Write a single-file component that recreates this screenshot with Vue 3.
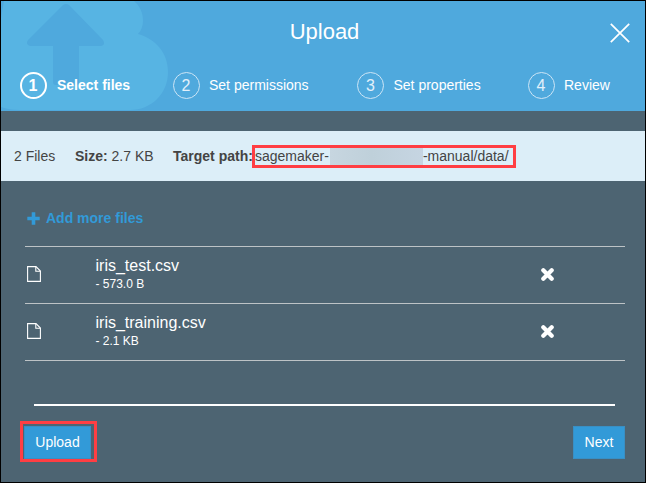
<script setup>
const steps = ['Select files', 'Set permissions', 'Set properties', 'Review']
const files = [
  { name: 'iris_test.csv', size: '573.0 B' },
  { name: 'iris_training.csv', size: '2.1 KB' },
]
</script>

<template>
  <div class="dialog">
    <header class="header">
      <svg class="cloud" width="170" height="110" viewBox="1 1 170 110" aria-hidden="true">
        <path fill="#57b4e3" d="M4 1H134C140 6 143 13 143 21C143 26 141 31 138 34C156 39 168 53 168 72C168 94 151 110 130 110H20Q9 110 1 107V18Z" />
        <path fill="#4fa9dd" d="M63 5Q66 3 69 5L103 40Q106 45 101 46H79V82Q79 85 76 85H56Q53 85 53 82V46H30Q25 44 28 40Z" />
      </svg>
      <h1 class="title">Upload</h1>
      <button class="close" aria-label="Close">
        <svg width="20" height="20" viewBox="0 0 20 20"><path d="M.8.8 19.2 19.2M19.2.8.8 19.2" stroke="#fff" stroke-width="1.7" /></svg>
      </button>
      <nav class="steps">
        <div v-for="(s, i) in steps" :key="s" class="step" :class="{ active: i === 0 }">
          <span class="num">{{ i + 1 }}</span><span class="label">{{ s }}</span>
        </div>
      </nav>
    </header>

    <section class="summary">
      <span class="count">2 Files</span>
      <span class="size"><b>Size:</b> 2.7 KB</span>
      <b class="target">Target path:</b>
      <span class="path"><span>sagemaker-</span><i class="redacted"></i><span>-manual/data/</span></span>
    </section>

    <main class="content">
      <button class="add">
        <svg width="13" height="13" viewBox="0 0 13 13"><path d="M6.5.3V12.7M.3 6.5H12.7" stroke="#329ad8" stroke-width="3.6" /></svg>
        <span>Add more files</span>
      </button>
      <div class="list">
        <div v-for="f in files" :key="f.name" class="row">
          <svg class="doc" width="14" height="16" viewBox="0 0 14 16" fill="none" stroke="#fff" stroke-width="1.1"><path d="M.6.6H9L13.4 5V15.4H.6Z" /><path d="M8.8.8V5.3H13.2" /></svg>
          <div class="info">
            <div class="name">{{ f.name }}</div>
            <div class="bytes">- {{ f.size }}</div>
          </div>
          <svg class="remove" width="13" height="13" viewBox="0 0 13 13"><path d="M2.3 2.3 10.7 10.7M10.7 2.3 2.3 10.7" stroke="#fff" stroke-width="4.2" stroke-linecap="round" /></svg>
        </div>
      </div>
      <div class="rule"></div>
      <footer class="actions">
        <div class="highlight"><button class="btn upload">Upload</button></div>
        <button class="btn next">Next</button>
      </footer>
    </main>
  </div>
</template>

<style>
body { margin: 0; }
</style>

<style scoped>
* { box-sizing: border-box; }
.dialog { width: 646px; height: 483px; border: 1px solid #000; background: #4d6472; font: 14px/18px "Liberation Sans", Arial, sans-serif; color: #fff; overflow: hidden; }
button { border: 0; padding: 0; background: none; color: inherit; font: inherit; }
svg { display: block; flex: none; }
.header { position: relative; height: 110px; background: #4fa9dd; }
.cloud { position: absolute; left: 0; top: 0; }
.title { position: relative; margin: 0 0 0 3px; padding-top: 18px; font-size: 22px; line-height: 26px; font-weight: 400; text-align: center; }
.close { position: absolute; right: 15px; top: 22px; }
.steps { position: relative; display: grid; grid-template-columns: 153px 184.5px 170.5px 100px; margin: 25px 0 0 18.5px; }
.step { display: flex; align-items: center; height: 30px; }
.num { display: flex; align-items: center; justify-content: center; width: 27px; height: 27px; padding-top: 1px; margin-right: 9.5px; border: 1.5px solid #cce5f6; border-radius: 50%; font-size: 16px; color: #e2f0fa; flex: none; }
.label { white-space: nowrap; }
.active { font-weight: 700; }
.active .num { border: 2px solid #fff; color: #fff; margin-right: 10.5px; }
.summary { display: flex; align-items: center; height: 50px; margin-top: 20px; padding-left: 13px; background: #dceef8; color: #444; white-space: nowrap; }
.count { width: 61px; }
.size { width: 98px; }
.target { width: 79px; }
.path { display: flex; align-items: center; width: 264px; height: 23px; margin-top: 1px; border: 3px solid #ff3e43; line-height: 17px; }
.redacted { width: 93px; height: 17px; margin-left: 1px; background: linear-gradient(90deg, #c7d6e0, #bfd0da 45%, #c6d5e2); }
.content { padding: 0 20px 0 24px; }
.add { display: flex; align-items: center; gap: 6px; height: 18px; margin: 28px 0 19px 2px; color: #329ad8; font-weight: 700; }
.list { border-top: 1px solid #bdc3c6; }
.row { display: grid; grid-template-columns: 70.5px 445.5px 1fr; height: 57px; border-bottom: 1px solid #bdc3c6; }
.doc { margin: 19px 0 0 2px; }
.remove { margin-top: 21px; }
.name { margin-top: 9px; font-size: 16px; line-height: 20px; }
.bytes { font-size: 12px; line-height: 16px; }
.rule { height: 2px; margin: 43px 10px 0 9px; background: #fff; }
.actions { display: flex; justify-content: space-between; margin: 15px 0 0 -5px; }
.highlight { display: flex; width: 77px; height: 41px; padding: 2px 0 0 1px; border: 3px solid #ff3e43; }
.btn { height: 33px; padding-bottom: 2px; background: #329ad8; border: 1px solid #398fc4; }
.upload { width: 67px; }
.next { width: 52px; margin-top: 5px; }
</style>
